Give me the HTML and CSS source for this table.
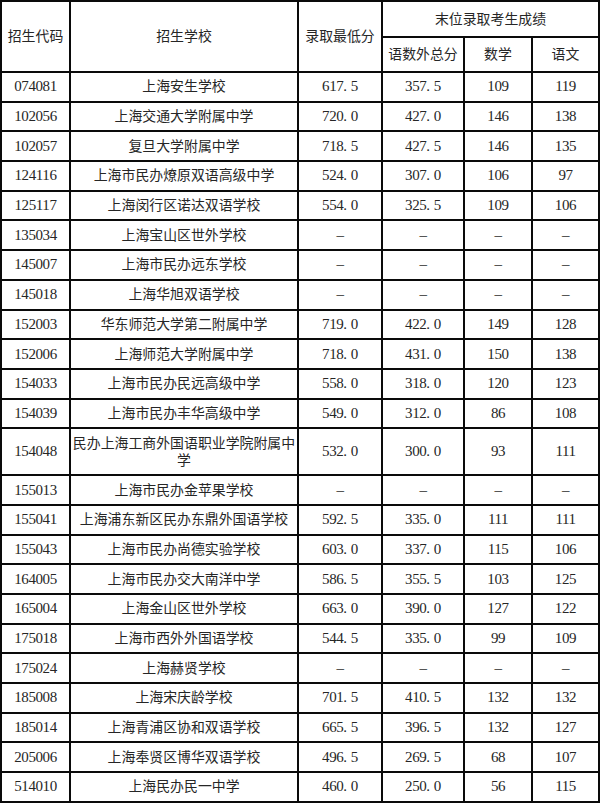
FILE: index.html
```html
<!DOCTYPE html>
<html lang="zh-CN">
<head>
<meta charset="utf-8">
<link rel="stylesheet" href="styles.css">
</head>
<body>
<table class="grid">
<colgroup>
<col class="c1"><col class="c2"><col class="c3"><col class="c4"><col class="c5"><col class="c6">
</colgroup>
<thead>
<tr class="h1"><th rowspan="2">招生代码</th><th rowspan="2">招生学校</th><th rowspan="2">录取最低分</th><th colspan="3">末位录取考生成绩</th></tr>
<tr class="h2"><th>语数外总分</th><th>数学</th><th>语文</th></tr>
</thead>
<tbody>
<tr><td>074081</td><td>上海安生学校</td><td>617<span class="dp">.</span>5</td><td>357<span class="dp">.</span>5</td><td>109</td><td>119</td></tr>
<tr><td>102056</td><td>上海交通大学附属中学</td><td>720<span class="dp">.</span>0</td><td>427<span class="dp">.</span>0</td><td>146</td><td>138</td></tr>
<tr><td>102057</td><td>复旦大学附属中学</td><td>718<span class="dp">.</span>5</td><td>427<span class="dp">.</span>5</td><td>146</td><td>135</td></tr>
<tr><td>124116</td><td>上海市民办燎原双语高级中学</td><td>524<span class="dp">.</span>0</td><td>307<span class="dp">.</span>0</td><td>106</td><td>97</td></tr>
<tr><td>125117</td><td>上海闵行区诺达双语学校</td><td>554<span class="dp">.</span>0</td><td>325<span class="dp">.</span>5</td><td>109</td><td>106</td></tr>
<tr><td>135034</td><td>上海宝山区世外学校</td><td>–</td><td>–</td><td>–</td><td>–</td></tr>
<tr><td>145007</td><td>上海市民办远东学校</td><td>–</td><td>–</td><td>–</td><td>–</td></tr>
<tr><td>145018</td><td>上海华旭双语学校</td><td>–</td><td>–</td><td>–</td><td>–</td></tr>
<tr><td>152003</td><td>华东师范大学第二附属中学</td><td>719<span class="dp">.</span>0</td><td>422<span class="dp">.</span>0</td><td>149</td><td>128</td></tr>
<tr><td>152006</td><td>上海师范大学附属中学</td><td>718<span class="dp">.</span>0</td><td>431<span class="dp">.</span>0</td><td>150</td><td>138</td></tr>
<tr><td>154033</td><td>上海市民办民远高级中学</td><td>558<span class="dp">.</span>0</td><td>318<span class="dp">.</span>0</td><td>120</td><td>123</td></tr>
<tr><td>154039</td><td>上海市民办丰华高级中学</td><td>549<span class="dp">.</span>0</td><td>312<span class="dp">.</span>0</td><td>86</td><td>108</td></tr>
<tr class="tall"><td>154048</td><td>民办上海工商外国语职业学院附属中学</td><td>532<span class="dp">.</span>0</td><td>300<span class="dp">.</span>0</td><td>93</td><td>111</td></tr>
<tr><td>155013</td><td>上海市民办金苹果学校</td><td>–</td><td>–</td><td>–</td><td>–</td></tr>
<tr><td>155041</td><td>上海浦东新区民办东鼎外国语学校</td><td>592<span class="dp">.</span>5</td><td>335<span class="dp">.</span>0</td><td>111</td><td>111</td></tr>
<tr><td>155043</td><td>上海市民办尚德实验学校</td><td>603<span class="dp">.</span>0</td><td>337<span class="dp">.</span>0</td><td>115</td><td>106</td></tr>
<tr><td>164005</td><td>上海市民办交大南洋中学</td><td>586<span class="dp">.</span>5</td><td>355<span class="dp">.</span>5</td><td>103</td><td>125</td></tr>
<tr><td>165004</td><td>上海金山区世外学校</td><td>663<span class="dp">.</span>0</td><td>390<span class="dp">.</span>0</td><td>127</td><td>122</td></tr>
<tr><td>175018</td><td>上海市西外外国语学校</td><td>544<span class="dp">.</span>5</td><td>335<span class="dp">.</span>0</td><td>99</td><td>109</td></tr>
<tr><td>175024</td><td>上海赫贤学校</td><td>–</td><td>–</td><td>–</td><td>–</td></tr>
<tr><td>185008</td><td>上海宋庆龄学校</td><td>701<span class="dp">.</span>5</td><td>410<span class="dp">.</span>5</td><td>132</td><td>132</td></tr>
<tr><td>185014</td><td>上海青浦区协和双语学校</td><td>665<span class="dp">.</span>5</td><td>396<span class="dp">.</span>5</td><td>132</td><td>127</td></tr>
<tr><td>205006</td><td>上海奉贤区博华双语学校</td><td>496<span class="dp">.</span>5</td><td>269<span class="dp">.</span>5</td><td>68</td><td>107</td></tr>
<tr><td>514010</td><td>上海民办民一中学</td><td>460<span class="dp">.</span>0</td><td>250<span class="dp">.</span>0</td><td>56</td><td>115</td></tr>
</tbody>
</table>
</body>
</html>
```
FILE: styles.css
```css
html, body {
  margin: 0;
  padding: 0;
  background: #ffffff;
}
.grid {
  border-collapse: collapse;
  table-layout: fixed;
  width: 600px;
  font-family: "Liberation Serif", "Noto Sans CJK SC", serif;
  font-size: 13.9px;
  color: #262626;
}
.c1 { width: 69px; }
.c2 { width: 228px; }
.c3 { width: 84px; }
.c4 { width: 82px; }
.c5 { width: 68px; }
.c6 { width: 67px; }
.grid th,
.grid td {
  border: 2px solid #0a0a0a;
  padding: 0 1px;
  text-align: center;
  vertical-align: middle;
  font-weight: normal;
  line-height: 17px;
}
.grid tbody td:not(:nth-child(2)) {
  font-size: 15px;
  letter-spacing: -0.4px;
}
.h1 { height: 36px; }
.h2 { height: 35px; }
.grid tbody tr { height: 29.7px; }
.grid tbody tr.tall { height: 47px; }
.dp {
  display: inline-block;
  width: 0.5em;
  text-align: left;
}
```
